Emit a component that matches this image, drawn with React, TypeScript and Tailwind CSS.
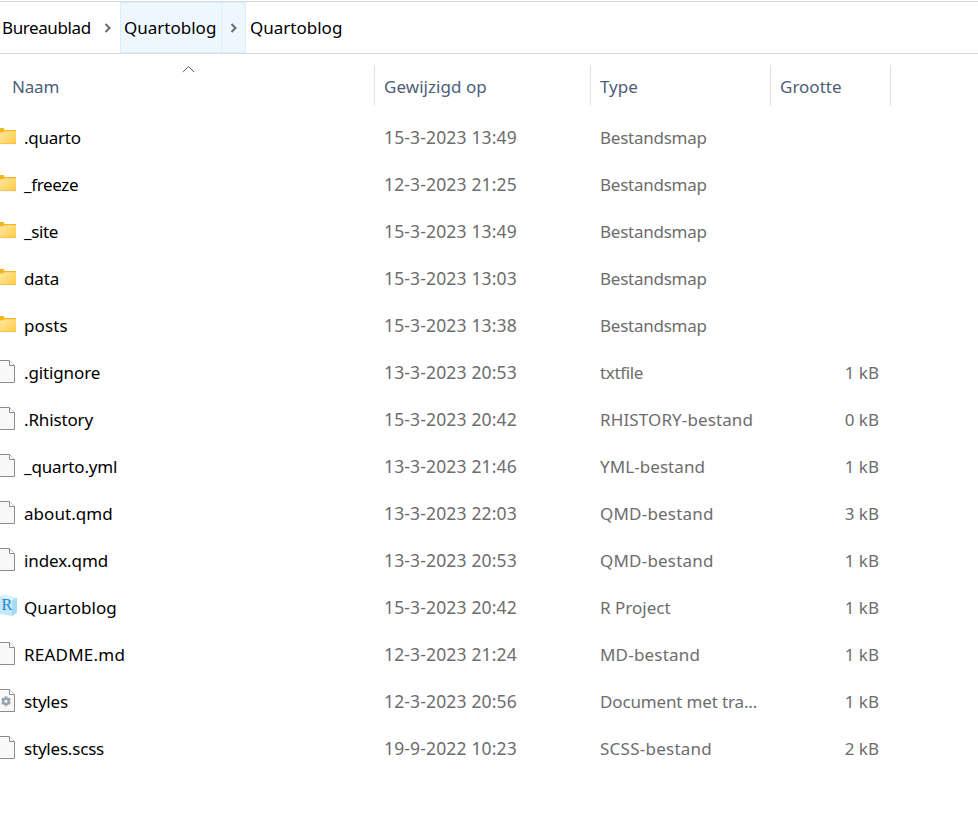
type Kind = 'folder' | 'file' | 'rproject' | 'settings';

interface Entry {
  name: string;
  nameClass: string;
  date: string;
  type: string;
  typeClass: string;
  size?: string;
  kind: Kind;
}

const entries: Entry[] = [
  { name: '.quarto', nameClass: 'tracking-[-0.25px]', date: '15-3-2023 13:49', type: 'Bestandsmap', typeClass: 'tracking-[-0.25px]', kind: 'folder' },
  { name: '_freeze', nameClass: 'tracking-[-0.35px]', date: '12-3-2023 21:25', type: 'Bestandsmap', typeClass: 'tracking-[-0.25px]', kind: 'folder' },
  { name: '_site', nameClass: 'tracking-[-0.35px]', date: '15-3-2023 13:49', type: 'Bestandsmap', typeClass: 'tracking-[-0.25px]', kind: 'folder' },
  { name: 'data', nameClass: 'tracking-[-0.1px]', date: '15-3-2023 13:03', type: 'Bestandsmap', typeClass: 'tracking-[-0.25px]', kind: 'folder' },
  { name: 'posts', nameClass: 'tracking-[0.15px]', date: '15-3-2023 13:38', type: 'Bestandsmap', typeClass: 'tracking-[-0.25px]', kind: 'folder' },
  { name: '.gitignore', nameClass: 'tracking-[-0.13px]', date: '13-3-2023 20:53', type: 'txtfile', typeClass: 'tracking-[-0.35px]', size: '1 kB', kind: 'file' },
  { name: '.Rhistory', nameClass: 'tracking-[-0.15px]', date: '15-3-2023 20:42', type: 'RHISTORY-bestand', typeClass: 'tracking-[0.12px]', size: '0 kB', kind: 'file' },
  { name: '_quarto.yml', nameClass: 'tracking-[-0.15px]', date: '13-3-2023 21:46', type: 'YML-bestand', typeClass: 'tracking-[0.07px]', size: '1 kB', kind: 'file' },
  { name: 'about.qmd', nameClass: 'tracking-[0.05px]', date: '13-3-2023 22:03', type: 'QMD-bestand', typeClass: 'tracking-[0.2px]', size: '3 kB', kind: 'file' },
  { name: 'index.qmd', nameClass: 'tracking-[-0.1px]', date: '13-3-2023 20:53', type: 'QMD-bestand', typeClass: 'tracking-[0.2px]', size: '1 kB', kind: 'file' },
  { name: 'Quartoblog', nameClass: 'tracking-[0.05px]', date: '15-3-2023 20:42', type: 'R Project', typeClass: '', size: '1 kB', kind: 'rproject' },
  { name: 'README.md', nameClass: 'tracking-[0.22px]', date: '12-3-2023 21:24', type: 'MD-bestand', typeClass: 'tracking-[0.2px]', size: '1 kB', kind: 'file' },
  { name: 'styles', nameClass: 'tracking-[-0.2px]', date: '12-3-2023 20:56', type: 'Document met tra...', typeClass: 'tracking-[-0.15px]', size: '1 kB', kind: 'settings' },
  { name: 'styles.scss', nameClass: 'tracking-[-0.2px]', date: '19-9-2022 10:23', type: 'SCSS-bestand', typeClass: 'tracking-[0.25px]', size: '2 kB', kind: 'file' },
];

function EntryIcon({ kind }: { kind: Kind }) {
  if (kind === 'folder') {
    return (
      <svg width="18" height="26" viewBox="0 0 18 26" className="shrink-0">
        <defs>
          <linearGradient id="folder" x1="0" y1="0" x2="1" y2="1">
            <stop offset="0" stopColor="#ffe7a2" />
            <stop offset="1" stopColor="#ffcb42" />
          </linearGradient>
        </defs>
        <path d="M0 4h3.2q1 0 1 1v1H16V9H0z" fill="#f3b61f" />
        <path d="M0 8.6h2.6L4.4 7.3H16V20H0z" fill="url(#folder)" />
        <path d="M0 19.6h16" stroke="#f0bd4c" strokeWidth=".7" />
      </svg>
    );
  }
  if (kind === 'rproject') {
    return (
      <svg width="18" height="26" viewBox="0 0 18 26" className="shrink-0">
        <path d="M0 2L5 .8 17 4v14.5L11.5 22 0 20z" fill="#c3e8fa" />
        <path d="M0 2L5 .8 17 4l-4.5 2L0 3.6z" fill="#dcf2fc" />
        <path d="M12.5 6L17 4v14.5L11.8 22z" fill="#a5daf5" />
        <text x="1.4" y="15.8" fontFamily="Liberation Serif, serif" fontSize="16" fill="#1d87d2">R</text>
      </svg>
    );
  }
  return (
    <svg width="18" height="26" viewBox="0 0 18 26" className="shrink-0">
      <path d="M0 1.5h9.5l5 5v17H0" fill="#f8f8f8" stroke="#8c8c8c" />
      <path d="M9.5 1.5v5h5" fill="#fff" stroke="#8c8c8c" />
      {kind === 'settings' && (
        <g transform="translate(6 13.3)">
          <circle r="2.8" fill="none" stroke="#98a5b2" strokeWidth="2.5" />
          <path d="M0-5v1.8M0 3.2V5M-4.3-2.5l1.5.9M2.8 1.6l1.5.9M-4.3 2.5l1.5-.9M2.8-1.6l1.5-.9" stroke="#98a5b2" strokeWidth="2.2" />
        </g>
      )}
    </svg>
  );
}

function Chevron() {
  return (
    <svg width="8" height="10" viewBox="0 0 8 10" fill="none" stroke="#6b6b6b" strokeWidth="2">
      <path d="M1.5 1l4 4-4 4" />
    </svg>
  );
}

export default function App() {
  return (
    <div className="h-[822px] w-[978px] overflow-hidden bg-white font-['Noto_Sans','Open_Sans',sans-serif] text-[17px] leading-6 whitespace-nowrap text-black">
      <nav className="mt-px flex h-[53px] border-y border-[#d9d9d9]">
        <div className="flex w-[120px] items-center pl-[2px]">
          <span className="w-[102px] tracking-[-0.4px]">Bureaublad</span>
          <Chevron />
        </div>
        <div className="flex w-[126px] border border-[#d9effc] bg-[#eff7fe]">
          <span className="flex w-[101px] items-center border-r border-[#d9effc] pl-[3px]">Quartoblog</span>
          <span className="flex items-center pl-[8px]"><Chevron /></span>
        </div>
        <span className="flex items-center pl-[4px]">Quartoblog</span>
      </nav>
      <header className="flex h-[60px] pt-[11px] text-[#4c607a]">
        <div className="flex h-[41px] w-[375px] flex-col border-r border-[#e2e2e2] pl-3">
          <svg width="12" height="8" viewBox="0 0 12 8" className="ml-[170px] shrink-0" fill="none" stroke="#5a5a5a">
            <path d="M.8 7L6.5 1.5 12 7" />
          </svg>
          <span className="mt-[2px] tracking-[-0.2px]">Naam</span>
        </div>
        <div className="flex h-[41px] w-[216px] border-r border-[#e2e2e2] pt-[10px] pl-[9px] tracking-[0.05px]">Gewijzigd op</div>
        <div className="flex h-[41px] w-[180px] border-r border-[#e2e2e2] pt-[10px] pl-[9px]">Type</div>
        <div className="flex h-[41px] w-[120px] border-r border-[#e2e2e2] pt-[10px] pl-[9px]">Grootte</div>
      </header>
      <main>
        {entries.map((entry) => (
          <div key={entry.name} className="flex h-[47px] items-center text-[#6d6d6d]">
            <div className="flex w-[384px] items-center gap-[6px] text-black">
              <div className="-mt-px"><EntryIcon kind={entry.kind} /></div>
              <span className={entry.nameClass}>{entry.name}</span>
            </div>
            <span className="w-[216px] pb-[2px] text-[17.5px] tracking-[0.15px]">{entry.date}</span>
            <span className="w-[179px]"><span className={entry.typeClass}>{entry.type}</span></span>
            <span className="w-[100px] text-right">{entry.size}</span>
          </div>
        ))}
      </main>
    </div>
  );
}
